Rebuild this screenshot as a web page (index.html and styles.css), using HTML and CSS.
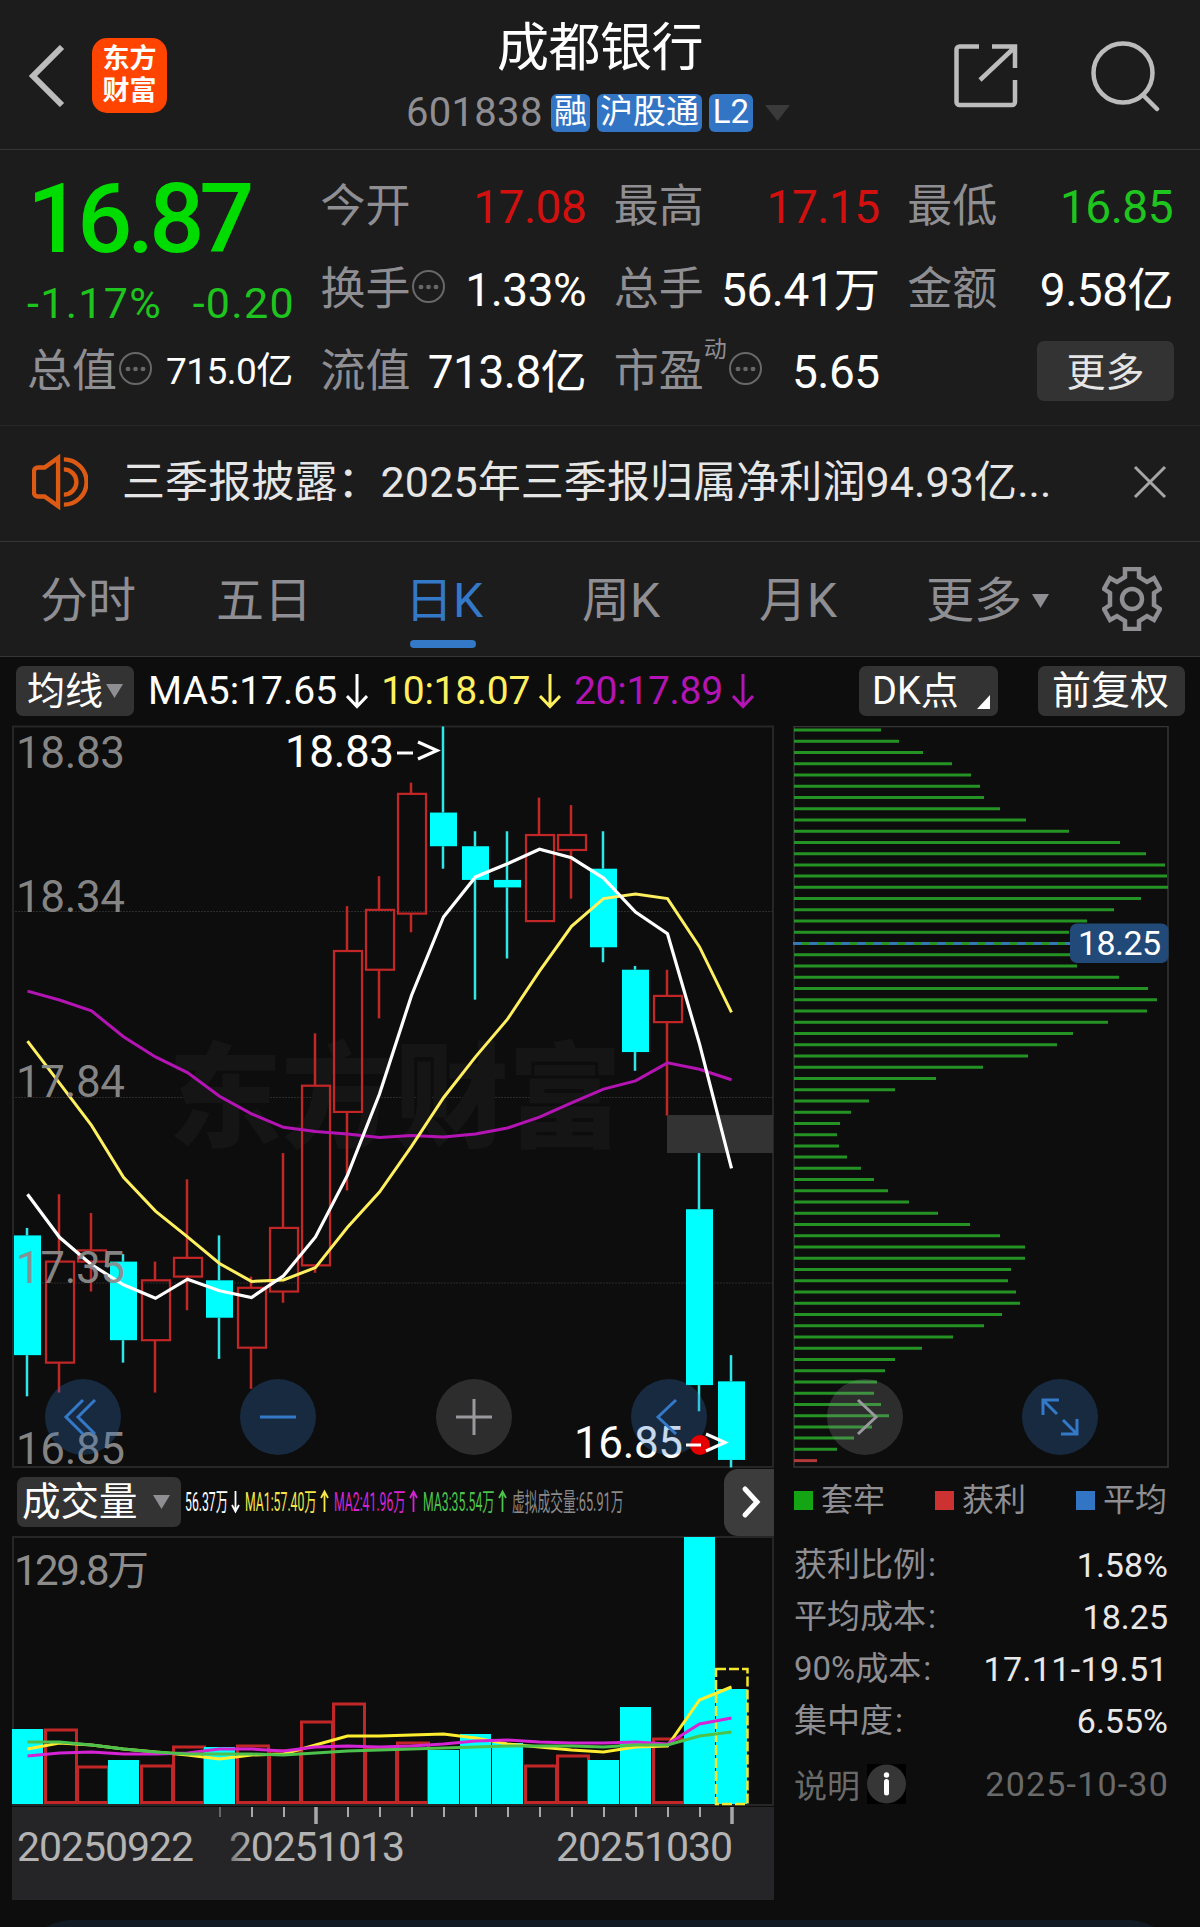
FILE: index.html
```html
<!DOCTYPE html>
<html lang="zh-CN">
<head>
    <meta charset="UTF-8">
    <meta name="viewport" content="width=device-width, initial-scale=1.0">
    <title>成都银行 601838</title>
    <link rel="stylesheet" href="styles.css">
</head>
<body>
    <header class="topbar">
        <div class="top-left">
            <svg class="back" width="38" height="62" viewBox="0 0 38 62"><path d="M34 2 L5 31 L34 60"/></svg>
            <div class="logo"><span>东方</span><span>财富</span></div>
        </div>
        <div class="stock">
            <h1>成都银行</h1>
            <div class="code-row">
                <span class="code">601838</span>
                <span class="tag tag-rong">融</span>
                <span class="tag tag-hgt">沪股通</span>
                <span class="tag tag-l2">L2</span>
                <span class="code-arrow"></span>
            </div>
        </div>
        <div class="top-right">
            <svg width="64" height="64" viewBox="0 0 64 64"><path d="M25 2.5H5.5a3 3 0 0 0-3 3V58a3 3 0 0 0 3 3H58a3 3 0 0 0 3-3V36M38 2.5H61V24M60 4L26 36"/></svg>
            <svg width="72" height="72" viewBox="0 0 72 72"><circle cx="33" cy="33" r="29.5"/><path d="M53 55L67 69" stroke-linecap="round"/></svg>
        </div>
    </header>

    <section class="quote">
        <div class="price-box">
            <div class="price">16.87</div>
            <div class="change"><span>-1.17%</span><span>-0.20</span></div>
        </div>
        <div class="cell"><label>今开</label><b class="red">17.08</b></div>
        <div class="cell"><label>最高</label><b class="red">17.15</b></div>
        <div class="cell"><label>最低</label><b class="green">16.85</b></div>
        <div class="cell"><label>换手</label><i class="dots"></i><b>1.33%</b></div>
        <div class="cell"><label>总手</label><b>56.41万</b></div>
        <div class="cell"><label>金额</label><b>9.58亿</b></div>
        <div class="cell"><label>总值</label><i class="dots"></i><b class="small">715.0亿</b></div>
        <div class="cell"><label>流值</label><b>713.8亿</b></div>
        <div class="cell"><label>市盈</label><sup>动</sup><i class="dots"></i><b>5.65</b></div>
        <div class="cell"><button class="more">更多</button></div>
    </section>

    <section class="news">
        <svg class="speaker" width="58" height="56" viewBox="0 0 58 56"><path d="M27 3V53L13 43H6a4 4 0 0 1-4-4V17a4 4 0 0 1 4-4H13Z"/><path d="M33 15a13 13 0 0 1 0 26M33 4.5a23.5 23.5 0 0 1 0 47"/></svg>
        <p>三季报披露：2025年三季报归属净利润94.93亿...</p>
        <svg class="close" width="34" height="34" viewBox="0 0 34 34"><path d="M2 2L32 32M32 2L2 32"/></svg>
    </section>

    <nav class="tabs">
        <a>分时</a>
        <a>五日</a>
        <a class="active">日K</a>
        <a>周K</a>
        <a>月K</a>
        <a class="tab-more">更多<span class="tri"></span></a>
        <svg class="gear" width="60" height="64" viewBox="-30 -32 60 64"><path d="M-7 -30H7V-22L15 -17L22 -21L28 -10L22 -6V6L28 10L22 21L15 17L7 22V30H-7V22L-15 17L-22 21L-28 10L-22 6V-6L-28 -10L-22 -21L-15 -17L-7 -22Z"/><circle r="10"/></svg>
    </nav>

    <div class="ma-bar">
        <button class="btn ma-btn">均线<span class="tri"></span></button>
        <span class="ma w">MA5:17.65<svg class="down" width="22" height="36" viewBox="0 0 22 36"><path d="M11 1V33M1 23L11 33.5L21 23"/></svg></span>
        <span class="ma y">10:18.07<svg class="down" width="22" height="36" viewBox="0 0 22 36"><path d="M11 1V33M1 23L11 33.5L21 23"/></svg></span>
        <span class="ma m">20:17.89<svg class="down" width="22" height="36" viewBox="0 0 22 36"><path d="M11 1V33M1 23L11 33.5L21 23"/></svg></span>
        <button class="btn dk-btn">DK点<span class="corner"></span></button>
        <button class="btn fq-btn">前复权</button>
    </div>

    <main class="charts">
        <div class="left-col">
            <svg id="kline" width="762" height="742" viewBox="12 726 762 742"></svg>

            <div class="vol-bar">
                <button class="btn vol-btn">成交量<span class="tri"></span></button>
                <svg class="vol-text" width="540" height="50" viewBox="181 1477 540 50">
                    <text transform="translate(185 1511) scale(0.49 1)" fill="#fff">56.37万</text>
                    <text transform="translate(245 1511) scale(0.49 1)" fill="#f5e64a">MA1:57.40万</text>
                    <text transform="translate(334 1511) scale(0.49 1)" fill="#d424d4">MA2:41.96万</text>
                    <text transform="translate(423 1511) scale(0.49 1)" fill="#4cc24c">MA3:35.54万</text>
                    <text transform="translate(512 1511) scale(0.51 1)" fill="#8a8a8a">虚拟成交量:65.91万</text>
                    <path d="M235.500 1491V1511M232 1505L235.500 1511.500L239 1505" stroke="#fff"/>
                    <path d="M324.500 1512V1492M321 1498L324.500 1491.500L328 1498" stroke="#f5e64a"/>
                    <path d="M413.500 1512V1492M410 1498L413.500 1491.500L417 1498" stroke="#d424d4"/>
                    <path d="M502.500 1512V1492M499 1498L502.500 1491.500L506 1498" stroke="#4cc24c"/>
                </svg>
                <button class="next"><svg width="20" height="34" viewBox="0 0 20 34"><path d="M4 4L16 17L4 30"/></svg></button>
            </div>

            <svg id="volume" width="762" height="270" viewBox="12 1536 762 270"></svg>
            <svg id="dates" width="762" height="94" viewBox="12 1806 762 94"></svg>
        </div>

        <div class="right-col">
            <svg id="cost" width="377" height="742" viewBox="793 726 377 742"></svg>

            <div class="legend">
                <span><i class="sq sq-green"></i>套牢</span>
                <span><i class="sq sq-red"></i>获利</span>
                <span><i class="sq sq-blue"></i>平均</span>
            </div>
            <dl class="cost-info">
                <div><dt>获利比例<s>:</s></dt><dd>1.58%</dd></div>
                <div><dt>平均成本<s>:</s></dt><dd>18.25</dd></div>
                <div><dt>90%成本<s>:</s></dt><dd class="range">17.11-19.51</dd></div>
                <div><dt>集中度<s>:</s></dt><dd>6.55%</dd></div>
            </dl>
            <div class="note">
                <span>说明</span>
                <svg class="info" width="39" height="40" viewBox="0 0 39 40"><rect width="39" height="40" fill="#000"/><circle cx="19.500" cy="20" r="19.500" fill="#363636"/><circle cx="19.500" cy="11" r="2.700" fill="#fff"/><path d="M19.500 17.500V29" stroke="#fff" stroke-width="5" stroke-linecap="round"/></svg>
                <time>2025-10-30</time>
            </div>
        </div>

        <!-- botões flutuantes sobre os gráficos -->
        <div class="controls">
            <button class="blue"><svg viewBox="-38 -38 76 76"><path d="M0 -17L-17 0L0 17M12 -17L-5 0L12 17"/></svg></button>
            <button class="blue"><svg viewBox="-38 -38 76 76"><path d="M-18 0H18"/></svg></button>
            <button class="gray"><svg viewBox="-38 -38 76 76"><path d="M-18 0H18M0 -18V18"/></svg></button>
            <button class="blue"><svg viewBox="-38 -38 76 76"><path d="M7 -17L-11 0L7 17"/></svg></button>
            <button class="gray"><svg viewBox="-38 -38 76 76"><path d="M-7 -17L11 0L-7 17"/></svg></button>
            <button class="blue"><svg viewBox="-38 -38 76 76"><path d="M-17 -2V-17H-1M-17 -17L-3 -3M17 2V17H1M17 17L3 3"/></svg></button>
        </div>
        <svg class="low-mark" width="60" height="40" viewBox="680 1425 60 40">
            <circle cx="700" cy="1445" r="10" fill="#e60000"/>
            <path d="M686 1445H701" stroke="#fff" stroke-width="3"/>
            <path d="M706 1434L725 1442.500L706 1451" stroke="#fff" stroke-width="3.200" fill="none"/>
        </svg>
    </main>

    <div class="bottom-sheet"></div>

    <script src="chart.js"></script>
</body>
</html>
```
FILE: styles.css
```css
* {
    margin: 0;
    padding: 0;
    box-sizing: border-box;
}

body {
    width: 1200px;
    height: 1927px;
    overflow: hidden;
    background-color: #0d0d0d;
    color: #fff;
    font-family: Roboto, "Noto Sans CJK SC", sans-serif;
}

svg {
    display: block;
    fill: none;
}

button {
    border: none;
    color: #fff;
    font-family: inherit;
    font-weight: 400;
}

.tri {
    width: 17px;
    height: 14px;
    background-color: #8e8e93;
    clip-path: polygon(0 0, 100% 0, 50% 100%);
}

/* topo */
.topbar {
    display: grid;
    grid-template-columns: 400px 400px 400px;
    height: 150px;
    background-color: #1c1c1c;
    border-bottom: 1px solid #363636;
}

.top-left {
    display: flex;
    align-items: center;
    padding: 2px 0 0 28px;
    gap: 26px;
}

.back {
    stroke: #bcbcbc;
    stroke-width: 6;
}

.logo {
    width: 75px;
    height: 75px;
    padding-top: 5px;
    border-radius: 15px;
    background-color: #ff4400;
    font-size: 27px;
    font-weight: 700;
    line-height: 32px;
    text-align: center;
}

.logo span {
    display: block;
}

.stock {
    padding-top: 18px;
}

h1 {
    font-size: 52px;
    font-weight: 400;
    line-height: 62px;
    text-align: center;
    letter-spacing: -0.5px;
}

.code-row {
    display: flex;
    align-items: center;
    height: 40px;
    margin: 13px 0 0 6px;
}

.code {
    width: 145px;
    color: #8e8e93;
    font-size: 40px;
    line-height: 40px;
    letter-spacing: 0.3px;
}

.tag {
    height: 38px;
    margin-right: 7px;
    border-radius: 6px;
    background-color: #3175c4;
    font-size: 33px;
    line-height: 36px;
    text-align: center;
}

.tag-rong {
    width: 39px;
}

.tag-hgt {
    width: 105px;
}

.tag-l2 {
    width: 44px;
}

.code-arrow {
    width: 25px;
    height: 16px;
    margin-left: 5px;
    background-color: #3a3a3a;
    clip-path: polygon(0 0, 100% 0, 50% 100%);
}

.top-right {
    display: flex;
    align-items: center;
    padding: 2px 38px 0 154px;
    justify-content: space-between;
    stroke: #bcbcbc;
    stroke-width: 4.5;
}

/* cotação */
.quote {
    display: grid;
    grid-template-columns: repeat(4, 1fr);
    grid-template-rows: 84px 82px 82px;
    column-gap: 27.5px;
    height: 276px;
    padding: 15px 27px 0;
    background-color: #1c1c1c;
    border-bottom: 1px solid #272727;
}

.price-box {
    grid-row: span 2;
}

.price {
    height: 108px;
    color: #00dc00;
    font-size: 97px;
    font-weight: 500;
    line-height: 108px;
    letter-spacing: -5px;
}

.change {
    display: flex;
    justify-content: space-between;
    color: #1fc51f;
    font-size: 43px;
    line-height: 60px;
    letter-spacing: 1.3px;
    margin-right: -2px;
}

.cell {
    display: flex;
    align-items: center;
    white-space: nowrap;
}

.cell label {
    color: #8e8e93;
    font-size: 45px;
    line-height: 60px;
}

.cell b {
    margin-left: auto;
    font-size: 46px;
    font-weight: 400;
    line-height: 60px;
    letter-spacing: -0.5px;
}

.cell b.small {
    font-size: 37px;
}

.cell .red {
    color: #d21010;
}

.cell .green {
    color: #1fc51f;
}

.cell sup {
    align-self: flex-start;
    margin-top: 6px;
    color: #8e8e93;
    font-size: 23px;
    line-height: 26px;
}

.dots {
    width: 33px;
    height: 33px;
    margin: -7px 0 0 2px;
    border: 2.5px solid #68686b;
    border-radius: 50%;
    background: radial-gradient(circle, #68686b 2px, transparent 2.6px) center / 7.5px 28px repeat-x content-box;
    padding: 0 3px;
}

.more {
    width: 137px;
    height: 60px;
    margin: -2px -1px 0 auto;
    padding-bottom: 5px;
    border-radius: 7px;
    background-color: #333;
    color: #e5e5e5;
    font-size: 39px;
}

/* notícia */
.news {
    display: flex;
    align-items: center;
    height: 116px;
    padding: 0 33px 3px 32px;
    background-color: #1c1c1c;
    border-bottom: 1px solid #363636;
}

.speaker {
    width: 56px;
    stroke: #dd5a14;
    stroke-width: 4.5;
}

.news p {
    margin-left: 34px;
    color: #e6e6e6;
    font-size: 43px;
    line-height: 60px;
    letter-spacing: 0.1px;
    white-space: nowrap;
}

.close {
    margin-left: auto;
    stroke: #a6a6a6;
    stroke-width: 3;
}

/* abas */
.tabs {
    display: flex;
    align-items: center;
    height: 115px;
    background-color: #1c1c1c;
    border-bottom: 1px solid #363636;
    color: #8e8e93;
    font-size: 48px;
    line-height: 60px;
}

.tabs a {
    position: relative;
    width: 176px;
    padding-top: 4px;
    text-align: center;
}

.tabs a:nth-child(3) {
    width: 184px;
}

.tabs a:nth-child(4) {
    width: 170px;
}

.tabs a:nth-child(5) {
    width: 184px;
}

.tabs .active {
    color: #3478c8;
}

.active::after {
    content: "";
    position: absolute;
    left: 58px;
    bottom: -17px;
    width: 66px;
    height: 8px;
    border-radius: 4px;
    background-color: #3478c8;
}

.tabs .tab-more {
    display: flex;
    align-items: center;
    justify-content: flex-end;
    gap: 10px;
    width: 159px;
}

.gear {
    margin-left: 53px;
    stroke: #8e8e93;
    stroke-width: 4.5;
}

/* médias */
.ma-bar {
    display: flex;
    align-items: center;
    height: 69px;
    padding: 0 15px 1px 16px;
    font-size: 39px;
}

.btn {
    display: flex;
    align-items: center;
    height: 50px;
    border-radius: 7px;
    background-color: #333;
    font-size: 38px;
    line-height: 50px;
}

.ma-btn {
    width: 118px;
    padding-left: 11px;
    gap: 3px;
    margin-right: 14px;
}

.ma {
    display: flex;
    align-items: center;
    gap: 9px;
    margin-right: 13px;
    line-height: 50px;
}

.down {
    stroke: currentColor;
    stroke-width: 3;
}

.w {
    color: #fff;
}

.y {
    color: #fff060;
    letter-spacing: -0.3px;
}

.m {
    color: #b414b4;
    letter-spacing: -0.3px;
}

.dk-btn {
    position: relative;
    width: 139px;
    margin-left: auto;
    padding-left: 13px;
}

.corner {
    position: absolute;
    right: 8px;
    bottom: 7px;
    width: 13px;
    height: 14px;
    background-color: #fff;
    clip-path: polygon(100% 0, 100% 100%, 0 100%);
}

.fq-btn {
    width: 147px;
    margin-left: 40px;
    padding-right: 2px;
    justify-content: center;
    font-size: 39px;
}

/* gráficos */
.charts {
    position: relative;
    display: flex;
    gap: 19px;
    padding-left: 12px;
}

.charts text {
    font-family: Roboto, "Noto Sans CJK SC", sans-serif;
}

#kline {
    overflow: visible;
}

.left-col {
    width: 762px;
}

.right-col {
    width: 377px;
}

.vol-bar {
    display: flex;
    align-items: center;
    height: 68px;
    padding-left: 5px;
}

.vol-btn {
    width: 164px;
    padding-left: 5px;
    justify-content: space-between;
    padding-right: 11px;
    font-size: 38.5px;
}

.vol-text {
    stroke-width: 1.8;
}

.vol-text text {
    font-size: 25px;
}

.next {
    display: flex;
    align-items: center;
    justify-content: center;
    width: 50px;
    height: 67px;
    margin-left: auto;
    padding-left: 4px;
    border-radius: 14px 0 0 14px;
    background-color: #3c3c3c;
}

.next svg {
    stroke: #fff;
    stroke-width: 5;
    stroke-linecap: round;
}

.legend {
    display: flex;
    justify-content: space-between;
    height: 64px;
    padding: 0 3px 0 1px;
    color: #8e8e93;
    font-size: 32px;
    line-height: 64px;
}

.legend span {
    display: flex;
    align-items: center;
    gap: 8px;
}

.sq {
    width: 19px;
    height: 19px;
}

.sq-green {
    background-color: #14a514;
}

.sq-red {
    background-color: #cc3232;
}

.sq-blue {
    background-color: #3175c4;
}

.cost-info {
    padding: 7px 2px 0 1px;
    font-size: 33px;
}

.cost-info div {
    display: flex;
    justify-content: space-between;
    height: 52px;
    line-height: 52px;
}

.cost-info dt {
    color: #8e8e93;
}

.cost-info s {
    margin-left: 2px;
    text-decoration: none;
}

.cost-info dd {
    color: #e8e8e8;
    font-size: 34px;
}

.cost-info .range {
    letter-spacing: 0.4px;
}

.note {
    display: flex;
    align-items: center;
    height: 52px;
    padding: 0 1px 0 1px;
    margin-top: 11px;
    color: #6a6a6a;
    font-size: 33px;
}

.info {
    margin-left: 7px;
}

.note time {
    margin-left: auto;
    font-size: 34px;
    letter-spacing: 1.2px;
}

.controls {
    position: absolute;
    left: 45px;
    top: 653px;
    display: flex;
    gap: 119.4px;
}

.controls button {
    width: 76px;
    height: 76px;
    border-radius: 50%;
}

.controls svg {
    width: 76px;
    height: 76px;
    stroke-width: 3;
}

.blue {
    background-color: rgba(49, 117, 196, 0.28);
    stroke: #3478c8;
}

.gray {
    background-color: rgba(142, 142, 147, 0.25);
    stroke: #9a9a9e;
}

.low-mark {
    position: absolute;
    left: 680px;
    top: 699px;
}

.bottom-sheet {
    height: 60px;
    margin: 20px 22px 0;
    border-radius: 50px 50px 0 0;
    background-color: #111a22;
}
```
FILE: chart.js
```js
// abertura, fechamento, máxima, mínima
var candles = [
    [17.47, 17.15, 17.49, 17.04],
    [17.13, 17.40, 17.58, 17.05],
    [17.40, 17.43, 17.53, 17.32],
    [17.40, 17.19, 17.42, 17.13],
    [17.19, 17.35, 17.40, 17.05],
    [17.36, 17.41, 17.62, 17.27],
    [17.35, 17.25, 17.47, 17.14],
    [17.17, 17.33, 17.36, 17.06],
    [17.32, 17.49, 17.69, 17.29],
    [17.39, 17.87, 18.01, 17.37],
    [17.80, 18.23, 18.35, 17.59],
    [18.18, 18.34, 18.43, 18.05],
    [18.33, 18.65, 18.68, 18.28],
    [18.60, 18.51, 18.83, 18.45],
    [18.51, 18.42, 18.55, 18.10],
    [18.42, 18.40, 18.55, 18.21],
    [18.31, 18.54, 18.64, 18.31],
    [18.50, 18.54, 18.62, 18.37],
    [18.45, 18.24, 18.55, 18.20],
    [18.18, 17.96, 18.19, 17.91],
    [18.04, 18.11, 18.18, 17.79],
    [17.54, 17.07, 17.69, 17.00],
    [17.08, 16.87, 17.15, 16.85]
];

var ma5 = [17.580, 17.465, 17.392, 17.338, 17.302, 17.353, 17.322, 17.304, 17.362, 17.466, 17.631, 17.848, 18.111, 18.321, 18.428, 18.463, 18.502, 18.479, 18.425, 18.334, 18.276, 17.982, 17.649];
var ma10 = [17.989, 17.877, 17.764, 17.625, 17.535, 17.466, 17.395, 17.347, 17.351, 17.384, 17.492, 17.586, 17.708, 17.838, 17.947, 18.048, 18.176, 18.296, 18.370, 18.382, 18.370, 18.241, 18.066];
var ma20 = [18.123, 18.099, 18.070, 18.001, 17.947, 17.905, 17.842, 17.795, 17.759, 17.748, 17.741, 17.732, 17.737, 17.733, 17.741, 17.757, 17.786, 17.824, 17.861, 17.883, 17.931, 17.914, 17.886];

// altura das barras de volume em px
var volume = [75, 73, 36, 44, 37, 56, 57, 57, 52, 81, 99, 54, 60, 54, 70, 61, 37, 47, 44, 97, 64, 267, 115];
var vma1 = [55, 61, 59, 55, 52, 49, 45, 49, 50, 59, 68, 68, 69, 70, 66, 60, 57, 54, 52, 57, 58, 104, 117];
var vma2 = [48, 51, 52, 50, 50, 51, 55, 55, 53, 57, 58, 57, 58, 60, 63, 64, 62, 61, 61, 62, 60, 80, 86];
var vma3 = [62, 62, 59, 55, 52, 50, 50, 50, 49, 51, 53, 54, 55, 56, 57, 58, 58, 58, 57, 59, 59, 68, 72];

var chips = [87, 105, 129, 158, 177, 186, 190, 206, 232, 275, 326, 352, 371, 373, 374, 347, 320, 293, 275, 279, 279, 283, 325, 354, 363, 353, 314, 279, 263, 234, 189, 142, 101, 75, 57, 46, 43, 45, 53, 67, 80, 94, 115, 144, 176, 206, 231, 231, 217, 214, 222, 226, 208, 190, 159, 128, 101, 91, 83, 80, 87, 95, 78, 60, 43, 23];

var CYAN = "#00ffff";
var RED = "#c32626";

function rect(x, y, w, h, attrs) {
    return `<rect x="${x}" y="${y}" width="${w}" height="${h}" ${attrs}/>`;
}

function line(x1, y1, x2, y2, attrs) {
    return `<line x1="${x1}" y1="${y1}" x2="${x2}" y2="${y2}" ${attrs}/>`;
}

function text(x, y, value, attrs) {
    return `<text x="${x}" y="${y}" ${attrs}>${value}</text>`;
}

function curve(values, toY, attrs) {
    var points = values.map(function(v, i) {
        return (27.5 + 32 * i) + "," + toY(v).toFixed(1);
    });
    return `<polyline points="${points.join(" ")}" fill="none" ${attrs}/>`;
}

function priceY(p) {
    return 726.5 + (18.83 - p) * 374.2;
}

function volumeY(v) {
    return 1804 - v;
}

function drawKline() {
    var out = rect(13, 726.5, 760, 740.5, 'stroke="#262626" stroke-width="2"');
    [911.5, 1097.5, 1283].forEach(function(y) {
        out += line(12, y, 773, y, 'stroke="#2b2b2b" stroke-dasharray="2 1"');
    });
    out += text(168, 1138, "东方财富", 'textLength="454" font-size="114" font-weight="900" fill="#151515"');

    candles.forEach(function(c, i) {
        var x = 27 + 32 * i;
        var top = priceY(Math.max(c[0], c[1]));
        var bottom = priceY(Math.min(c[0], c[1]));
        var up = c[1] > c[0];
        var wick = 'stroke-width="2.500" stroke="' + (up ? RED : "#30e6e6") + '"';
        out += line(x, priceY(c[2]), x, top, wick) + line(x, bottom, x, priceY(c[3]), wick);
        if (up) {
            out += rect(x - 13, top, 28, bottom - top, 'stroke-width="2.200" stroke="' + RED + '"');
        } else {
            out += rect(x - 13, top, 27, bottom - top, 'fill="' + CYAN + '"');
        }
    });

    // lacuna de preço
    out += rect(667, 1115, 106, 38, 'fill="#333"');
    out += curve(ma20, priceY, 'stroke="#b414b4" stroke-width="3"');
    out += curve(ma10, priceY, 'stroke="#fff060" stroke-width="3"');
    out += curve(ma5, priceY, 'stroke="#fff" stroke-width="3.200"');

    [["18.83", 767.5], ["18.34", 912], ["17.84", 1097], ["17.35", 1283], ["16.85", 1464]].forEach(function(l) {
        out += text(16, l[1], l[0], 'textLength="109" font-size="44" fill="#8c8c8c" fill-opacity="0.95"');
    });
    out += text(285, 766.5, "18.83", 'textLength="109" font-size="44" fill="#fff"');
    out += line(397, 753, 413, 753, 'stroke="#fff" stroke-width="3"');
    out += '<path d="M418 742L437 750.5L418 759" stroke="#fff" stroke-width="3.200"/>';
    out += text(574, 1458, "16.85", 'textLength="109" font-size="44" fill="#fff"');
    document.getElementById("kline").innerHTML = out;
}

function drawVolume() {
    var out = rect(13, 1537, 760, 268, 'stroke="#262626" stroke-width="2"');
    out += text(14, 1585, "129.8万", 'textLength="135" font-size="42" fill="#8c8c8c"');
    volume.forEach(function(v, i) {
        var x = 12 + 32 * i;
        var up = candles[i][1] > candles[i][0];
        if (up) {
            out += rect(x + 1.5, 1805 - v - 2, 31, v - 0.5, 'stroke-width="3" stroke="' + RED + '"');
        } else {
            out += rect(x, 1804 - v, 31, v, 'fill="' + CYAN + '"');
        }
    });
    out += rect(716, 1669, 31.5, 135, 'stroke="#f5e62e" stroke-width="2.500" stroke-dasharray="10 3"');
    out += curve(vma1, volumeY, 'stroke="#ffee30" stroke-width="3"');
    out += curve(vma2, volumeY, 'stroke="#d424d4" stroke-width="3"');
    out += curve(vma3, volumeY, 'stroke="#4cc24c" stroke-width="3"');
    document.getElementById("volume").innerHTML = out;
}

function drawDates() {
    var out = '<defs><linearGradient id="fade" gradientUnits="userSpaceOnUse" x1="228" x2="252" y1="0" y2="0"><stop offset="0" stop-color="#777"/><stop offset="1" stop-color="#b4b4b4"/></linearGradient></defs>';
    out += rect(12, 1807, 762, 93, 'fill="#252527"');
    for (var i = 6; i < 23; i++) {
        var big = i == 9 || i == 22;
        out += line(28 + 32 * i, 1807, 28 + 32 * i, big ? 1824 : 1817, 'stroke="' + (i == 6 ? "#666" : "#a8a8a8") + '" stroke-width="' + (big ? 3.5 : 2) + '"');
    }
    out += text(17, 1861, "20250922", 'textLength="177" font-size="41" fill="#b4b4b4"');
    out += text(229, 1861, "20251013", 'textLength="176" font-size="41" fill="url(#fade)"');
    out += text(556, 1861, "20251030", 'textLength="177" font-size="41" fill="#b4b4b4"');
    document.getElementById("dates").innerHTML = out;
}

function drawCost() {
    var out = rect(794, 726.5, 374, 740.5, 'stroke="#363636" stroke-width="1.500"');
    chips.forEach(function(w, i) {
        var y = 730 + 11.24 * i;
        out += line(794, y, 794 + w, y, 'stroke-width="3" stroke="' + (i == 65 ? "#b23a3a" : "#249324") + '"');
    });
    out += line(793, 943.5, 1070, 943.5, 'stroke="#3478b4" stroke-width="3" stroke-dasharray="8 8"');
    out += rect(1070, 923.5, 98.5, 39.5, 'rx="7" fill="#224a78"');
    out += text(1078, 955, "18.25", 'textLength="83" font-size="34" fill="#fff"');
    document.getElementById("cost").innerHTML = out;
}

drawKline();
drawVolume();
drawDates();
drawCost();
```
